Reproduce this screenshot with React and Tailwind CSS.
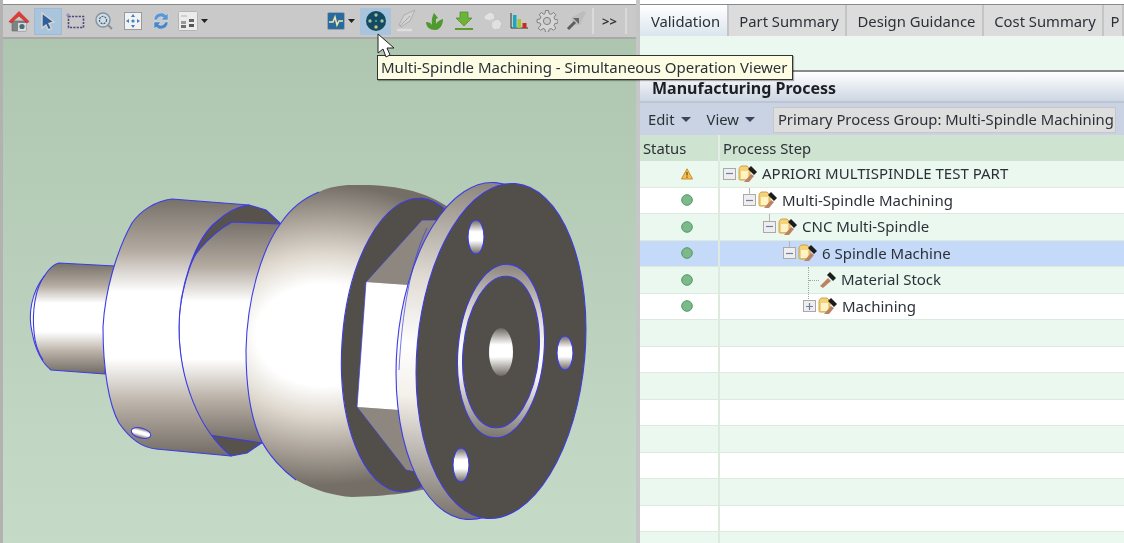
import { Fragment } from 'react';

const font = 'font-["Noto_Sans","Open_Sans",sans-serif]';

const HomeIcon = () => (
  <svg width="22" height="24" viewBox="0 0 22 24">
    <path d="M4 12h14v10H4z" fill="#7f8382" stroke="#666" strokeWidth="0.6" />
    <path d="M10 14h8v8h-8z" fill="#d4dcdc" />
    <circle cx="14" cy="17.500" r="2.600" fill="#4c6b78" />
    <path d="M1 12.500 11 2.500l10 10-2 1.500-8-7-8 7z" fill="#e23b35" stroke="#b32a28" strokeWidth="0.6" />
  </svg>
);

const ArrowIcon = () => (
  <svg width="20" height="22" viewBox="0 0 20 22">
    <path d="M4 3l12 9-5 1.500 2.500 5-3 1.500-2.500-5L4 18z" fill="#2d5f9f" stroke="#d8d4cc" strokeWidth="1.400" />
  </svg>
);

const MarqueeIcon = () => (
  <svg width="20" height="18" viewBox="0 0 20 18">
    <rect x="2.500" y="4.500" width="15" height="11" fill="none" stroke="#4e4680" strokeWidth="1.600" strokeDasharray="2.200 1.200" />
    <path d="M2 1v5M0 3h4" stroke="#8f86c0" strokeWidth="1" />
  </svg>
);

const ZoomIcon = () => (
  <svg width="20" height="20" viewBox="0 0 20 20">
    <circle cx="9" cy="9" r="7" fill="#d3dde2" stroke="#7b93a8" strokeWidth="1.400" />
    <circle cx="9" cy="9" r="3.600" fill="none" stroke="#46657f" strokeWidth="1.200" strokeDasharray="2 1" />
    <path d="M14 14l4 4" stroke="#8a8f8a" strokeWidth="1.800" />
  </svg>
);

const FitIcon = () => (
  <svg width="18" height="18" viewBox="0 0 18 18">
    <rect x="0.500" y="0.500" width="17" height="17" fill="#f2f2f2" stroke="#9a9a9a" />
    <path d="M9 2l2 3H7zM9 16l-2-3h4zM2 9l3-2v4zM16 9l-3 2V7z" fill="#3f7fc4" />
    <circle cx="9" cy="9" r="1.600" fill="#3f7fc4" />
  </svg>
);

const RefreshIcon = () => (
  <svg width="18" height="20" viewBox="0 0 18 20">
    <path d="M2 9a7 7 0 0 1 12-5l2-2v7h-7l2.400-2.400A4 4 0 0 0 5 9z" fill="#5b95d2" stroke="#d9e6f2" strokeWidth="0.500" />
    <path d="M16 11a7 7 0 0 1-12 5l-2 2v-7h7l-2.400 2.400A4 4 0 0 0 13 11z" fill="#4a86c6" stroke="#d9e6f2" strokeWidth="0.500" />
  </svg>
);

const LayoutIcon = () => (
  <svg width="20" height="20" viewBox="0 0 20 20">
    <rect x="0.500" y="0.500" width="19" height="19" rx="1" fill="#ececec" stroke="#b4b4b4" />
    <path d="M3 4h6v2H3z" fill="#d0d0d0" />
    <path d="M3 10h5v3H3z" fill="#9a9a9a" />
    <path d="M3 14h5v3H3z" fill="#6f6f6f" />
    <path d="M11 8h5v3h-5z" fill="#666" />
    <path d="M11 13h5v3h-5z" fill="#555" />
  </svg>
);

const ChartIcon = () => (
  <svg width="18" height="18" viewBox="0 0 18 18">
    <rect x="0.500" y="0.500" width="17" height="17" rx="1.500" fill="#2a6a9e" stroke="#98a4ad" />
    <path d="M2 10h4l2-5 2 8 2-4h4" fill="none" stroke="#f0e9a8" strokeWidth="1.500" />
  </svg>
);

const SpindleIcon = () => (
  <svg width="22" height="22" viewBox="0 0 22 22">
    <circle cx="11" cy="11" r="10" fill="#144a62" />
    <circle cx="11" cy="5" r="1.700" fill="#9cc7a0" />
    <circle cx="5" cy="11" r="1.700" fill="#9cc7a0" />
    <circle cx="17" cy="11" r="1.700" fill="#9cc7a0" />
    <circle cx="11" cy="17" r="1.700" fill="#d4c36f" />
    <circle cx="11" cy="11" r="1.200" fill="#4f8a96" />
  </svg>
);

const PenIcon = () => (
  <svg width="22" height="24" viewBox="0 0 22 24">
    <path d="M20 1 9 6 4 16l2 2 9-6z" fill="#d2d2d2" stroke="#aeaeae" />
    <path d="M5 17 15 7" stroke="#9f9f9f" strokeWidth="0.800" />
    <path d="M2 21h15" stroke="#dedede" strokeWidth="2.500" />
  </svg>
);

const SproutIcon = () => (
  <svg width="20" height="20" viewBox="0 0 20 20">
    <path d="M10 19c-5 0-9-3-9-8 3 0 5 1 6 3 0-3-1-6 2-12l4 5-2 1v5c1-2 3-4 7-5 0 6-3 11-8 11z" fill="#4f9a2e" />
  </svg>
);

const DownloadIcon = () => (
  <svg width="20" height="20" viewBox="0 0 20 20">
    <path d="M6 1h8v6h4l-8 8-8-8h4z" fill="#6cb33a" stroke="#4b8a26" strokeWidth="0.700" />
    <path d="M1 17h18v2H1z" fill="#5c9d31" />
  </svg>
);

const CloudIcon = () => (
  <svg width="22" height="22" viewBox="0 0 22 22">
    <path d="M3 6 9 2l4 2 1 5-6 2-5-2z" fill="#e2e2e2" stroke="#c6c6c6" />
    <path d="M11 11l6-2 4 4-2 6-6 1-3-4z" fill="#e0e0e0" stroke="#c6c6c6" />
    <circle cx="11" cy="11" r="2" fill="#cfcfcf" />
  </svg>
);

const BarsIcon = () => (
  <svg width="18" height="18" viewBox="0 0 18 18">
    <path d="M1 1v15h17" fill="none" stroke="#333" strokeWidth="1" />
    <rect x="3" y="3" width="3.500" height="13" fill="#1aa5c0" />
    <rect x="7.500" y="7" width="3.500" height="9" fill="#a6c72f" />
    <rect x="12.500" y="11" width="4" height="5" fill="#c92a22" />
  </svg>
);

const GearIcon = () => (
  <svg width="22" height="22" viewBox="0 0 22 22">
    <path d="M9.500 1h3l.5 3 2 .9L17.600 3l2.200 2.200L18 7.900l.9 2.100 3 .5v3l-3 .5-.9 2 1.800 2.600-2.200 2.200-2.600-1.800-2 .9-.5 2.900h-3l-.5-2.900-2-.9-2.600 1.800-2.200-2.200L5 15.500 4.100 13.500l-3-.5v-3l3-.5.9-2.100L3.200 5.200 5.400 3 8 4.900l1-.9z" transform="translate(0 -0.500)" fill="#d6d6d6" stroke="#777" strokeWidth="0.900" />
    <circle cx="11" cy="11" r="3.600" fill="#c9c9c9" stroke="#777" strokeWidth="0.900" />
  </svg>
);

const PinIcon = () => (
  <svg width="20" height="20" viewBox="0 0 20 20">
    <path d="M5 7 17 0 20 1 14 14 8 14z" fill="#bdbdbd" />
    <path d="M2 18l7-7" stroke="#5e5e5e" strokeWidth="3" />
    <path d="M7 7h6v6z" fill="#666" />
  </svg>
);

const Caret = () => (
  <svg width="7" height="4" viewBox="0 0 7 4">
    <path d="M0 0h7L3.500 4z" fill="#222" />
  </svg>
);

// the machined part in the 3d viewport
const PartDrawing = () => (
  <svg width="632" height="504" viewBox="4 39 632 504" className="block">
    <defs>
      <linearGradient id="shaft" x1="0" y1="0" x2="0" y2="1">
        <stop offset="0" stopColor="#77716a" />
        <stop offset="0.2" stopColor="#b3aaa0" />
        <stop offset="0.36" stopColor="#fff" />
        <stop offset="0.62" stopColor="#fff" />
        <stop offset="0.8" stopColor="#b9b0a6" />
        <stop offset="1" stopColor="#716b64" />
      </linearGradient>
      <radialGradient id="ball" gradientUnits="userSpaceOnUse" cx="325" cy="335" r="200" gradientTransform="translate(0 83.750) scale(1 0.750)">
        <stop offset="0" stopColor="#fff" />
        <stop offset="0.34" stopColor="#fff" />
        <stop offset="0.54" stopColor="#dfd9cf" />
        <stop offset="0.76" stopColor="#aea69c" />
        <stop offset="1" stopColor="#746e67" />
      </radialGradient>
      <linearGradient id="rim" x1="0" y1="0" x2="0" y2="1">
        <stop offset="0" stopColor="#8b857d" />
        <stop offset="0.3" stopColor="#e0dbd3" />
        <stop offset="0.5" stopColor="#fff" />
        <stop offset="0.65" stopColor="#f4f0ea" />
        <stop offset="1" stopColor="#7a746d" />
      </linearGradient>
      <linearGradient id="hole" x1="0" y1="0" x2="0" y2="1">
        <stop offset="0" stopColor="#6d675f" />
        <stop offset="0.35" stopColor="#fff" />
        <stop offset="0.6" stopColor="#fff" />
        <stop offset="1" stopColor="#6d675f" />
      </linearGradient>
    </defs>
    <g stroke="#3c3ce6" strokeWidth="1.100" strokeLinejoin="round">
      {/* shaft */}
      <path d="M60 263 116 266 106 374 52 370C42 362 36 348 33 332 29 315 32 292 46 275 50 269 54 264 60 263Z" fill="url(#shaft)" />
      <path d="M46 275C36 288 33 312 35 332 36 345 40 354 44 360" fill="none" />
      {/* groove behind first collar */}
      <path d="M250 205 267 210 282 224 264 442 248 453 232 456C200 430 180 380 180 327 180 290 195 240 217 222 228 212 240 206 250 205Z" fill="#57524c" />
      <path d="M233 222 281 224 263 443 210 435C192 413 180 370 180 327 180 295 192 258 200 250 210 238 222 228 233 222Z" fill="url(#shaft)" />
      {/* first collar */}
      <path d="M173 199 250 205C240 206 228 212 217 222 195 240 180 290 180 327 180 380 200 430 232 456L157 449C147 448 133 442 120 423 110 405 104 370 104 327 106 290 118 250 133 223 142 210 157 201 173 199Z" fill="url(#shaft)" />
      <ellipse cx="142" cy="433" rx="10" ry="5" transform="rotate(15 142 433)" fill="url(#hole)" />
      {/* ball */}
      <path d="M282 223C292 208 305 198 320 192 330 187 342 185 353 185 395 184 430 190 460 215L455 480C420 494 385 496 353 497 335 496 315 490 297 480 283 470 270 455 263 442 252 420 247 385 247 350 248 300 262 250 282 223Z" fill="url(#ball)" stroke="none" />
      <path d="M320 192C305 198 292 208 282 223 262 250 248 300 247 350 247 385 252 420 263 442 270 455 283 470 297 480" fill="none" />
      {/* back face and hex */}
      <ellipse cx="412" cy="345" rx="69" ry="147" transform="rotate(4 412 345)" fill="#524e49" />
      <path d="M423 220 438 220 410 285 367 282Z" fill="#8e8780" stroke="none" />
      <path d="M358 407 400 410 417 472 407 470Z" fill="#8e8780" stroke="none" />
      <path d="M367 282 410 285 400 410 358 407Z" fill="#fff" stroke="none" />
      <path d="M367 282 423 220 438 220M358 407 407 470 417 472M367 282 358 407" fill="none" strokeWidth="0.700" />
      {/* flange */}
      <ellipse cx="482" cy="351" rx="84" ry="169" transform="rotate(5 482 351)" fill="url(#rim)" />
      <path d="M428 228C412 262 403 310 400 370" fill="none" strokeWidth="0.700" />
      <ellipse cx="502" cy="351" rx="84" ry="168" transform="rotate(5 502 351)" fill="#524e49" />
      <ellipse cx="477" cy="237" rx="8" ry="17" fill="url(#hole)" />
      <ellipse cx="566" cy="353" rx="8" ry="17" fill="url(#hole)" />
      <ellipse cx="462" cy="465" rx="8" ry="17" fill="url(#hole)" />
      <ellipse cx="502" cy="351" rx="43" ry="87" transform="rotate(5 502 351)" fill="url(#rim)" />
      <ellipse cx="502" cy="352" rx="38" ry="76" transform="rotate(5 502 352)" fill="#524e49" />
      <ellipse cx="502" cy="352" rx="12" ry="24" fill="url(#hole)" stroke="none" />
    </g>
  </svg>
);

const CursorIcon = () => (
  <svg width="18" height="26" viewBox="0 0 18 26">
    <path d="M1 1v19l5-4 3 8 4-2-3-7h7z" fill="#fff" stroke="#222" strokeWidth="1" />
  </svg>
);

const leftTools = [
  { w: 31, icon: <HomeIcon /> },
  { w: 28, icon: <ArrowIcon />, active: true },
  { w: 28, icon: <MarqueeIcon /> },
  { w: 28, icon: <ZoomIcon /> },
  { w: 29, icon: <FitIcon /> },
  { w: 28, icon: <RefreshIcon /> },
  { w: 26, icon: <LayoutIcon /> },
];

const rightTools = [
  { w: 29, icon: <PenIcon /> },
  { w: 29, icon: <SproutIcon /> },
  { w: 29, icon: <DownloadIcon /> },
  { w: 27, icon: <CloudIcon /> },
  { w: 27, icon: <BarsIcon /> },
  { w: 29, icon: <GearIcon /> },
  { w: 30, icon: <PinIcon /> },
];

const Toolbar = () => (
  <div className="flex h-[34px] items-center bg-[#c9c9c9] border-b-2 border-[#a9a9a9]">
    {leftTools.map((t, i) => (
      <div
        key={i}
        style={{ width: t.w }}
        className={`flex h-[27px] items-center justify-center ${t.active ? 'bg-[#a9c5de] border border-[#9dbbd6]' : ''}`}
      >
        {t.icon}
      </div>
    ))}
    <Caret />
    <div className="ml-[118px] flex w-[20px] justify-center"><ChartIcon /></div>
    <div className="ml-[2px]"><Caret /></div>
    <div className="ml-[5px] flex h-[27px] w-[31px] items-center justify-center bg-[#a9c5de]"><SpindleIcon /></div>
    {rightTools.map((t, i) => (
      <div key={i} style={{ width: t.w }} className="flex h-[27px] items-center justify-center">
        {t.icon}
      </div>
    ))}
    <div className="ml-[1px] h-[26px] w-[2px] bg-[#dadada]" />
    <div className="w-[31px] text-center text-[13px] font-bold leading-none text-[#333]">&gt;&gt;</div>
    <div className="h-[26px] w-[2px] bg-[#dadada]" />
  </div>
);

const tabs = [
  { label: 'Validation', w: 89, active: true },
  { label: 'Part Summary', w: 118 },
  { label: 'Design Guidance', w: 137 },
  { label: 'Cost Summary', w: 120 },
  { label: 'P', w: 20 },
];

const rows = [
  { label: 'APRIORI MULTISPINDLE TEST PART', status: 'warn', depth: 0 },
  { label: 'Multi-Spindle Machining', status: 'ok', depth: 1 },
  { label: 'CNC Multi-Spindle', status: 'ok', depth: 2 },
  { label: '6 Spindle Machine', status: 'ok', depth: 3, selected: true },
  { label: 'Material Stock', status: 'ok', depth: 4, hammerOnly: true },
  { label: 'Machining', status: 'ok', depth: 4, collapsed: true },
];

const StatusDot = ({ status }) =>
  status === 'warn' ? (
    <svg width="12" height="12" viewBox="0 0 12 12">
      <path d="M6 .8 11.500 11H.5z" fill="#f3c04f" stroke="#c98d2a" strokeLinejoin="round" />
      <path d="M6 4v3.500M6 8.500v1.200" stroke="#6b4a12" strokeWidth="1.200" />
    </svg>
  ) : (
    <svg width="12" height="12" viewBox="0 0 12 12">
      <circle cx="6" cy="6" r="5.300" fill="#7db98a" stroke="#4c9a63" />
    </svg>
  );

const Hammer = () => (
  <svg width="18" height="18" viewBox="0 0 18 18" className="shrink-0">
    <path d="M1 15 9 7l3 3-8 7z" fill="#bb8364" />
    <path d="M8 4l3-3 6 6-3 3z" fill="#1d1d1d" />
  </svg>
);

const FolderHammer = () => (
  <svg width="20" height="18" viewBox="0 0 20 18" className="shrink-0">
    <path d="M1 5c0-2 1-4 3-4h5l3 3v11H2c-1 0-1-1-1-2z" fill="#f4d27a" stroke="#c79a3d" strokeWidth="0.900" />
    <path d="M3 6h7v8H3z" fill="#fff2c4" />
    <path d="M6 17 13 9l3 2-5 6z" fill="#bb8364" />
    <path d="M10 4l3-3 6 6-3 3z" fill="#1d1d1d" />
  </svg>
);

const Expander = ({ collapsed }) => (
  <div className="flex h-[12px] w-[13px] shrink-0 items-center justify-center border border-[#a9a9a9] bg-[#eeeeee]">
    <svg width="9" height="9" viewBox="0 0 9 9">
      <path d={collapsed ? 'M1 4.500h7M4.500 1v7' : 'M1 4.500h7'} stroke="#6f7fa8" strokeWidth="1.200" />
    </svg>
  </div>
);

const ROW_INDENT = 20;

const TreeRow = ({ row }) => {
  const left = 3 + row.depth * ROW_INDENT;
  return (
    <div className={`flex h-[26.5px] items-center border-b border-[#dcebdd] ${row.selected ? 'bg-[#c5daf8]' : ''}`}>
      <div className="flex w-[78px] shrink-0 justify-center pl-[15px]"><StatusDot status={row.status} /></div>
      <div
        className="relative flex h-full flex-1 items-center gap-[2px] border-l-2 border-[#dcebdd]"
        style={{ paddingLeft: row.hammerOnly ? 99 : left }}
      >
        {/* tree connectors */}
        {row.depth > 0 && !row.hammerOnly && !row.collapsed && (
          <span className="absolute top-0 h-[7px] w-px bg-[#b5b5b5]" style={{ left: left + 6 }} />
        )}
        {row.hammerOnly && (
          <>
            <span className="absolute top-0 left-[88px] h-full border-l border-dotted border-[#a5a5a5]" />
            <span className="absolute top-[13px] left-[89px] w-[10px] border-t border-dotted border-[#a5a5a5]" />
          </>
        )}
        {row.collapsed && <span className="absolute top-0 left-[88px] h-[7px] border-l border-dotted border-[#a5a5a5]" />}
        {!row.hammerOnly && <Expander collapsed={row.collapsed} />}
        {row.hammerOnly ? <Hammer /> : <FolderHammer />}
        <span className="ml-[2px] whitespace-nowrap text-[15px] leading-none text-[#2c3138]">{row.label}</span>
      </div>
    </div>
  );
};

const EmptyRow = ({ tint }) => (
  <div className={`flex h-[26.5px] border-b border-[#dcebdd] ${tint ? 'bg-[#ebf8f0]' : 'bg-white'}`}>
    <div className="w-[80px] shrink-0 border-r-2 border-[#dcebdd]" />
  </div>
);

export default function App() {
  return (
    <div className={`relative flex h-[543px] w-[1124px] overflow-hidden bg-white blur-[0.5px] ${font}`}>
      {/* 3d viewport */}
      <div className="flex w-[636px] shrink-0 flex-col border-l-[3px] border-[#b2b2b2] pt-[4px]">
        <div className="border-t border-[#8a8a8a]">
          <Toolbar />
        </div>
        <div className="flex-1 overflow-hidden bg-gradient-to-b from-[#aec6b0] to-[#c6dac8]">
          <PartDrawing />
        </div>
      </div>
      <div className="w-[4px] shrink-0 bg-[#c6c6c6]" />

      {/* process panel */}
      <div className="flex min-w-0 flex-1 flex-col pt-[4px]">
        <div className="flex h-[32px] shrink-0 border-t border-[#8a8a8a] bg-[#dcdcdc]">
          {tabs.map((t) => (
            <div
              key={t.label}
              style={{ width: t.w }}
              className={`flex shrink-0 items-center justify-center border-r-2 border-[#c4c4c4] pl-[4px] pt-[2px] text-[14.800px] text-[#2c3138] ${t.active ? 'bg-gradient-to-b from-white to-[#dbe5ee]' : ''}`}
            >
              {t.label}
            </div>
          ))}
        </div>
        <div className="h-[34px] shrink-0 bg-[#ebf8f0]" />
        <div className="flex h-[33px] shrink-0 items-center border-y-2 border-t-[#8a8a8a] border-b-[#bcc6d2] bg-gradient-to-b from-white to-[#cdd6e3] pl-[12px] pt-[2px] text-[16px] font-bold text-[#1d1f24]">
          Manufacturing Process
        </div>
        <div className="flex h-[32px] shrink-0 items-center bg-[#c9d3e3] pt-[1px] text-[14.800px] text-[#2c3138]">
          {['Edit', 'View'].map((m) => (
            <Fragment key={m}>
              <span className="ml-[8px]">{m}</span>
              <svg width="10" height="5" viewBox="0 0 10 5" className="ml-[6px] mr-[8px]">
                <path d="M0 0h10L5 5z" fill="#3b4658" />
              </svg>
            </Fragment>
          ))}
          <div className="ml-[10px] flex h-[26px] w-[343px] shrink-0 items-center whitespace-nowrap border border-[#c7c7c7] bg-[#dedede] pl-[4px]">
            Primary Process Group: Multi-Spindle Machining
          </div>
        </div>
        <div className="flex h-[26px] shrink-0 items-center bg-[#cfe3d1] text-[14.800px] text-[#2c3138]">
          <div className="w-[78px] shrink-0 pl-[3px]">Status</div>
          <div className="flex h-full flex-1 items-center border-l-2 border-[#e2eee3] pl-[3px]">Process Step</div>
        </div>
        <div className="flex-1 overflow-hidden bg-white">
          {rows.map((r, i) => (
            <div key={r.label} className={i % 2 === 0 ? 'bg-[#ebf8f0]' : 'bg-white'}>
              <TreeRow row={r} />
            </div>
          ))}
          {Array.from({ length: 9 }).map((_, i) => (
            <EmptyRow key={i} tint={i % 2 === 0} />
          ))}
        </div>
      </div>

      {/* hover tooltip and pointer */}
      <div className="absolute left-[377px] top-[55px] flex h-[25px] w-[416px] items-center whitespace-nowrap border border-[#333] bg-[#fdfde3] pl-[3px] text-[15px] text-[#2c3138] shadow-[1px_1px_1px_rgba(0,0,0,0.3)]">
        Multi-Spindle Machining - Simultaneous Operation Viewer
      </div>
      <div className="absolute left-[377px] top-[33px]">
        <CursorIcon />
      </div>
    </div>
  );
}
